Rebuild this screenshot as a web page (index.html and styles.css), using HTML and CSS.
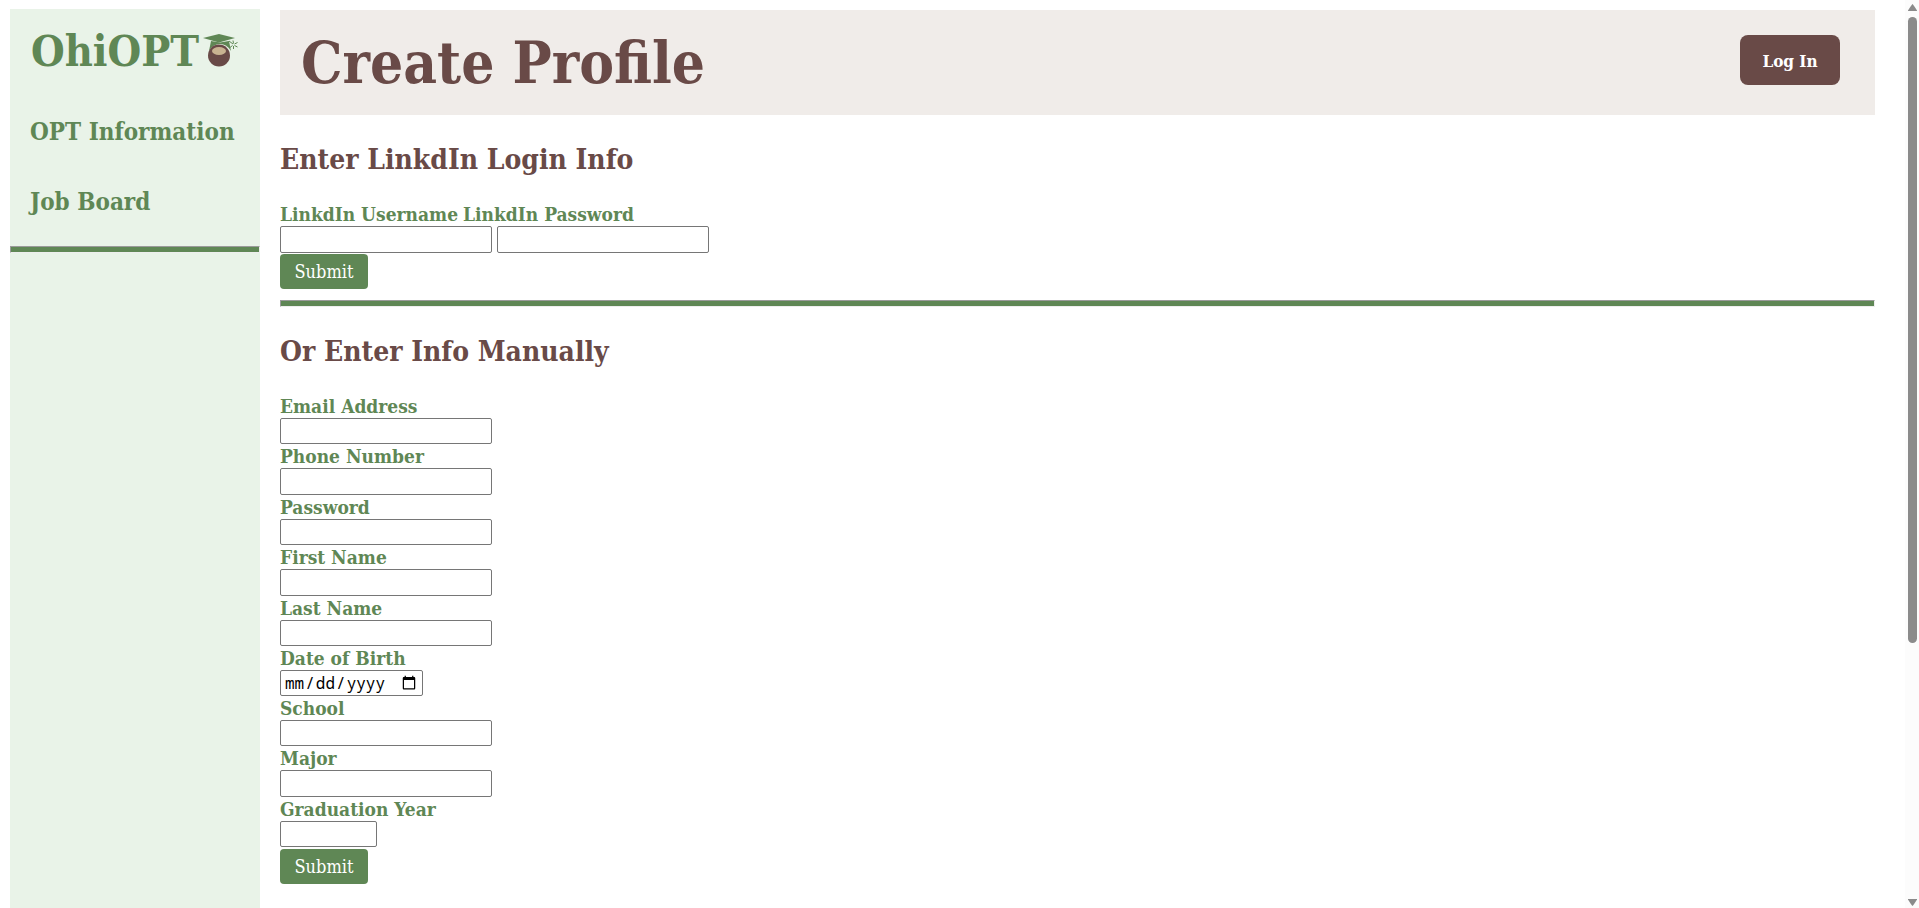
FILE: index.html
```html
<!DOCTYPE html>
<html lang="en">
<head>
<meta charset="utf-8">
<title>Create Profile - OhiOPT</title>
<link rel="stylesheet" href="styles.css">
</head>
<body>
<div class="page">
  <aside class="sidebar">
    <a class="logo" href="#">
      <span class="logo-text">OhiOPT</span>
      <svg class="logo-mark" viewBox="0 0 36 36" aria-hidden="true">
        <path class="leaf" d="M8 8 17 9.500 26 8 28 18Q24 11 17 11Q10 11 6 18Z"/>
        <path class="cap" d="M0 5 16 1 32 5 16 9.500Z"/>
        <circle class="nut" cx="16" cy="22.500" r="11"/>
        <ellipse class="nut-eye" cx="16" cy="18" rx="7" ry="4"/>
        <path class="tassel" d="M26 8l4 3M30 7.500l.5 3M34.500 9.500l-3 1.500M34.500 14l-3-1.500M30.500 16v-3M27 14.500l2.500-2"/>
      </svg>
    </a>
    <nav class="nav">
      <a href="#">OPT Information</a>
      <a href="#">Job Board</a>
    </nav>
    <hr class="rule">
  </aside>
  <main class="main">
    <header class="header">
      <h1>Create Profile</h1>
      <button class="login" type="button">Log In</button>
    </header>
    <form class="linked">
      <h2>Enter LinkdIn Login Info</h2>
      <div class="labels"><label for="lu">LinkdIn Username</label><label for="lp">LinkdIn Password</label></div>
      <div class="pair"><input class="input tall" id="lu" type="text"><input class="input tall" id="lp" type="password"></div>
      <button class="submit" type="submit">Submit</button>
    </form>
    <hr class="rule">
    <form class="manual">
      <h2>Or Enter Info Manually</h2>
      <label for="email">Email Address</label><input class="input" id="email" type="email">
      <label for="phone">Phone Number</label><input class="input tall" id="phone" type="tel">
      <label for="pw">Password</label><input class="input" id="pw" type="password">
      <label for="fn">First Name</label><input class="input tall" id="fn" type="text">
      <label for="ln">Last Name</label><input class="input" id="ln" type="text">
      <label for="dob">Date of Birth</label><input class="input date" id="dob" type="date">
      <label for="school">School</label><input class="input" id="school" type="text">
      <label for="major">Major</label><input class="input tall" id="major" type="text">
      <label for="year">Graduation Year</label><input class="input year" id="year" type="number">
      <button class="submit" type="submit">Submit</button>
    </form>
  </main>
</div>
<div class="scrollbar" aria-hidden="true">
  <svg class="arrow" viewBox="0 0 9 7"><path d="M4.500 0Q5 0 9 6.500V7H0V6.500Q4 0 4.500 0Z"/></svg>
  <div class="track"><div class="thumb"></div></div>
  <svg class="arrow" viewBox="0 0 9 7"><path d="M4.500 7Q5 7 9 .5V0H0V.5Q4 7 4.500 7Z"/></svg>
</div>
</body>
</html>
```
FILE: styles.css
```css
:root {
  --green: #5f8755;
  --brown: #694a47;
}

* { box-sizing: border-box; }

body {
  margin: 0;
  background: #fff;
  color: var(--green);
  font-family: "DejaVu Serif Condensed", "DejaVu Serif", serif;
  font-weight: 700;
}

.page {
  display: grid;
  grid-template-columns: 250px 1fr;
  column-gap: 20px;
  min-height: 100vh;
  padding: 9px 44px 0 10px;
}

.sidebar { background: #e9f3e8; }

.logo {
  display: flex;
  align-items: center;
  gap: 4px;
  padding: 18px 16px 0 21px;
  color: inherit;
  text-decoration: none;
}
.logo-text { font-size: 43px; line-height: 48px; }
.logo-mark { width: 36px; height: 36px; flex: none; }
.cap, .leaf { fill: var(--green); }
.nut { fill: var(--brown); }
.nut-eye { fill: #c8b391; }
.tassel { fill: none; stroke: var(--green); stroke-width: 1; }

.nav {
  display: flex;
  flex-direction: column;
  gap: 38px;
  padding: 41px 0 28px 20px;
}
.nav a {
  color: inherit;
  font-size: 24px;
  line-height: 32px;
  text-decoration: none;
  white-space: nowrap;
}

.rule {
  height: 7px;
  margin: 0;
  border: 1px solid;
  border-color: #9a9a9a #eee #eee #9a9a9a;
  background: var(--green);
}

.main { padding-top: 1px; }

.header {
  display: flex;
  align-items: center;
  justify-content: space-between;
  min-height: 105px;
  padding: 0 35px 0 21px;
  background: #f0ece9;
  color: var(--brown);
}
h1 { margin: 0; font-size: 58px; line-height: 64px; }
h2 {
  margin: 0;
  padding: 26px 0 23px;
  color: var(--brown);
  font-size: 28px;
  line-height: 38px;
}

.login {
  width: 100px;
  height: 50px;
  margin-bottom: 5px;
  padding: 2px 0 0;
  border: 0;
  border-radius: 8px;
  background: var(--brown);
  color: #fff;
  font: inherit;
  font-size: 17px;
}

label { font-size: 19px; line-height: 24px; }
.labels, .pair { display: flex; gap: 5px; }
.linked { padding-bottom: 11px; }

.manual {
  display: flex;
  flex-direction: column;
  align-items: flex-start;
}

.input {
  width: 212px;
  height: 26px;
  margin: 0;
  padding: 1px 3px;
  border: 1px solid #767676;
  border-radius: 2px;
  background: #fff;
  color: #000;
  font-family: "Noto Sans Mono", "DejaVu Sans Mono", monospace;
  font-size: 16px;
}
.tall { height: 27px; }
.date { width: 143px; }
.year { width: 97px; }

.submit {
  display: block;
  width: 88px;
  height: 35px;
  margin-top: 1px;
  padding: 0;
  border: 0;
  border-radius: 4px;
  background: var(--green);
  color: #fff;
  font: inherit;
  font-weight: 400;
  font-size: 18px;
}
.manual .submit { margin-top: 2px; }

.scrollbar {
  position: fixed;
  inset: 0 0 0 auto;
  display: flex;
  flex-direction: column;
  align-items: center;
  gap: 6px;
  width: 14px;
  padding: 4px 0 2px;
  background: #fcfcfc;
}
.arrow { width: 9px; height: 7px; fill: #8b8b8b; }
.track { flex: 1; width: 9px; }
.thumb { height: 71.500%; border-radius: 5px; background: #8b8b8b; }
```
